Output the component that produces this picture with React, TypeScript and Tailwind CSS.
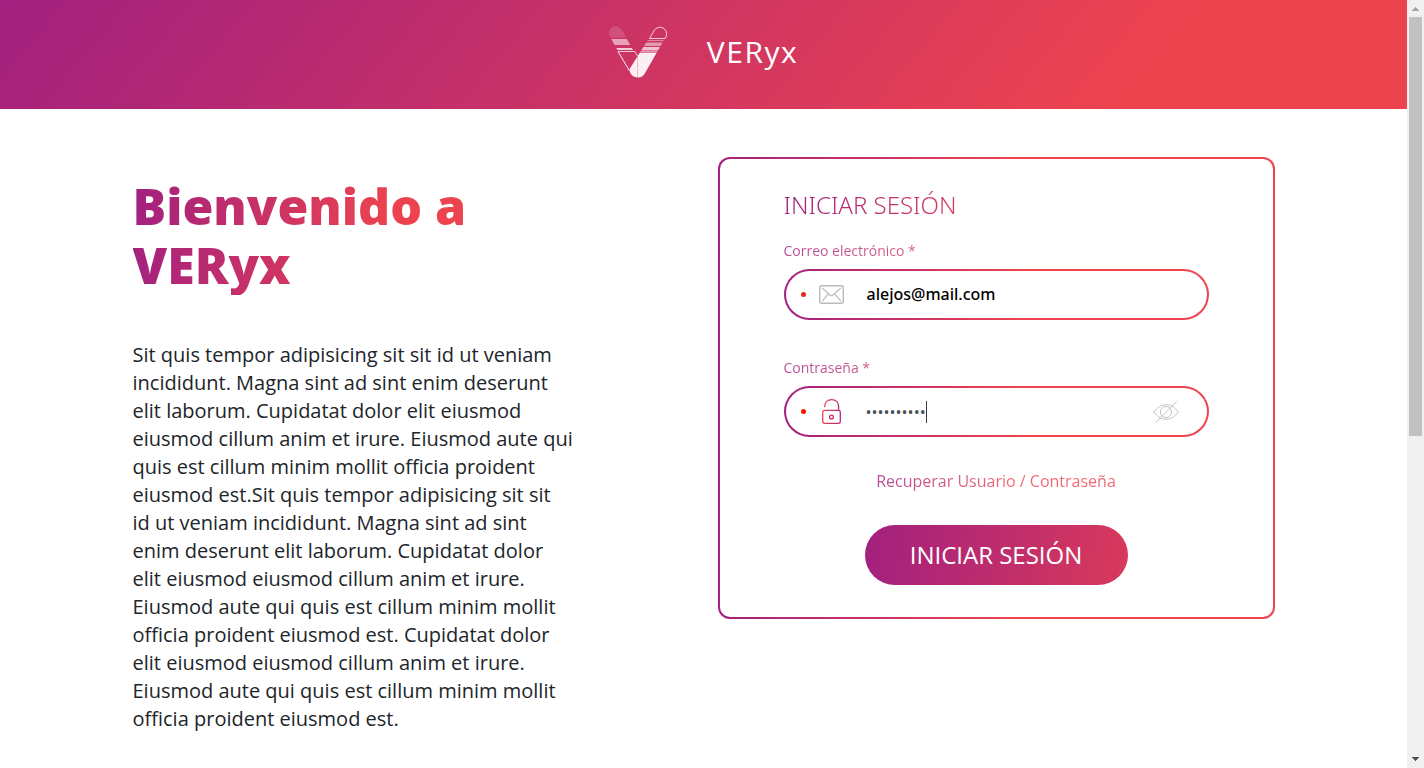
import { useState } from "react";

function Logo() {
  return (
    <svg width="58" height="52" viewBox="0 0 58 52" fill="none" aria-hidden="true">
      <defs>
        <clipPath id="left-arm">
          <path d="M.9 10.5A6.7 6.7 0 0 1 12.6 3.6L29 33V46H20.6Z" />
        </clipPath>
        <clipPath id="right-arm">
          <path d="M20.6 43L45.4 3.4A6.8 6.8 0 0 1 57 10.5L35.5 48A8.2 8.2 0 0 1 20.6 43Z" />
        </clipPath>
      </defs>
      <g clipPath="url(#left-arm)" fill="#fff">
        <path d="M0 0H30V11.5H0Z" opacity=".15" />
        <path d="M0 13H30V19H0Z" opacity=".55" />
        <path d="M0 22H30V24H0Z" opacity=".75" />
      </g>
      <path d="M9 25.5L20.6 45" stroke="#fff" strokeOpacity=".9" />
      <path d="M9 25.5H26L28.5 30" stroke="#fff" strokeOpacity=".75" />
      <path d="M40.5 12.5L45.5 4A6.7 6.7 0 0 1 57.3 10L56.2 12.5Z" stroke="#fff" strokeOpacity=".75" />
      <g clipPath="url(#right-arm)" fill="#fff">
        <path d="M20 14H58V15H20Z" opacity=".4" />
        <path d="M20 16.5H58V20H20Z" opacity=".5" />
        <path d="M20 21H58V24.5H20Z" opacity=".7" />
        <path d="M20 25.2H58V26.4H20Z" opacity=".7" />
        <path d="M20 27H58V52H20Z" opacity=".92" />
      </g>
      <path d="M28.5 30V52" stroke="#d6346b" strokeOpacity=".3" />
    </svg>
  );
}

function MailIcon() {
  return (
    <svg width="25" height="19" viewBox="0 0 25 19" fill="none" stroke="#b9b9b9" strokeLinecap="round" aria-hidden="true">
      <rect x=".7" y=".7" width="23.6" height="17.6" rx="2" strokeWidth="1.4" />
      <path d="M3.3 3.1L11.3 10.2Q12.5 11.2 13.7 10.2L21.7 3.1M3.3 15.8L9.3 9.1M21.7 15.8L15.7 9.1" strokeWidth="1.2" />
    </svg>
  );
}

function LockIcon() {
  return (
    <svg width="19" height="25" viewBox="0 0 19 25" fill="none" strokeWidth="1.3" strokeLinecap="round" aria-hidden="true">
      <defs>
        <linearGradient id="lock-stroke" x1="0" y1="0" x2="19" y2="0" gradientUnits="userSpaceOnUse">
          <stop stopColor="#ef434f" />
          <stop offset="1" stopColor="#b02878" />
        </linearGradient>
      </defs>
      <path d="M2.6 7.6C2.8 3.4 5.6.7 9.6.7C13.8.7 16.6 3.4 16.6 7.5V11.4" stroke="url(#lock-stroke)" />
      <rect x=".7" y="11.4" width="17.6" height="12.9" rx="1.8" stroke="url(#lock-stroke)" />
      <circle cx="9.5" cy="18" r="1.9" stroke="#c52b68" />
    </svg>
  );
}

function EyeOffIcon() {
  return (
    <svg width="26" height="22" viewBox="0 0 26 22" fill="none" stroke="#c4c4c4" strokeLinecap="round" aria-hidden="true">
      <path d="M.9 11C4 6.3 8.5 3.7 13 3.7S22 6.3 25.1 11C22 15.7 17.5 18.3 13 18.3S4 15.7.9 11Z" />
      <circle cx="13" cy="11" r="5.6" />
      <path d="M23.5.7L3 21.3" />
    </svg>
  );
}

const gradientText =
  "bg-[linear-gradient(90deg,#a2207f_0%,#ed434f_55%)] bg-clip-text text-transparent";

const fieldBox =
  "flex h-[51px] items-center rounded-full border-2 border-transparent pl-[15px] pr-7 [background:linear-gradient(#fff,#fff)_padding-box,linear-gradient(90deg,#a2207f_0%,#ed434f_55%)_border-box]";

export default function App() {
  const [email, setEmail] = useState("alejos@mail.com");
  const [password, setPassword] = useState("contrasena");
  const [visible, setVisible] = useState(false);

  return (
    <div className="flex h-screen overflow-hidden bg-white font-['Open_Sans','Noto_Sans',sans-serif] text-[#212529]">
      <div className="min-w-0 flex-1 overflow-hidden">
        <header className="flex h-[109px] items-center justify-center gap-10 bg-[linear-gradient(130deg,#a2207f_0%,#ed434f_80%)] pb-1.5">
          <Logo />
          <span className="text-[30px] tracking-wider text-white">VERyx</span>
        </header>

        <main className="mx-auto flex max-w-[1142px] items-start justify-between pt-12">
          <section className="w-[441px] pt-5">
            <h1 className="bg-[linear-gradient(95deg,#a2207f_0%,#ed434f_58%)] bg-clip-text text-[50px] leading-[59px] font-extrabold text-transparent">
              Bienvenido a VERyx
            </h1>
            <p className="mt-[46px] text-xl leading-7">
              Sit quis tempor adipisicing sit sit id ut veniam incididunt. Magna sint ad sint enim
              deserunt elit laborum. Cupidatat dolor elit eiusmod eiusmod cillum anim et irure.
              Eiusmod aute qui quis est cillum minim mollit officia proident eiusmod est.Sit quis
              tempor adipisicing sit sit id&nbsp;ut veniam incididunt. Magna sint ad sint enim
              deserunt elit laborum. Cupidatat dolor elit eiusmod eiusmod cillum anim et irure.
              Eiusmod aute qui quis est cillum minim mollit officia proident eiusmod est. Cupidatat
              dolor elit eiusmod eiusmod cillum anim et irure. Eiusmod aute qui quis est cillum
              minim mollit officia proident eiusmod est.
            </p>
          </section>

          <form
            onSubmit={(event) => event.preventDefault()}
            className="flex w-[557px] flex-col rounded-xl border-2 border-transparent px-16 pt-7 pb-8 [background:linear-gradient(#fff,#fff)_padding-box,linear-gradient(90deg,#a2207f_0%,#ed434f_52%)_border-box]"
          >
            <h2 className={`font-['Noto_Sans',sans-serif] text-2xl leading-9 font-light ${gradientText}`}>
              INICIAR SESIÓN
            </h2>

            <label htmlFor="email" className={`mt-[18px] mb-2 text-sm leading-5 opacity-80 ${gradientText}`}>
              Correo electrónico *
            </label>
            <div className={fieldBox}>
              <span className="mr-[13px] size-[5px] rounded-full bg-[#e6281a]" />
              <MailIcon />
              <input
                id="email"
                type="email"
                value={email}
                onChange={(event) => setEmail(event.target.value)}
                className="ml-[23px] min-w-0 flex-1 pb-0.5 font-['Noto_Sans',sans-serif] text-base font-medium text-black outline-none"
              />
            </div>

            <label htmlFor="password" className={`mt-[38px] mb-2 text-sm leading-5 opacity-80 ${gradientText}`}>
              Contraseña *
            </label>
            <div className={fieldBox}>
              <span className="mr-4 size-[5px] rounded-full bg-[#f51505]" />
              <LockIcon />
              <input
                id="password"
                type={visible ? "text" : "password"}
                value={password}
                onChange={(event) => setPassword(event.target.value)}
                className="ml-[25px] field-sizing-content min-w-0 text-base text-[#495057] caret-transparent outline-none"
              />
              <span className="h-[22px] w-px bg-[#333b43]" />
              <button
                type="button"
                aria-label="Mostrar contraseña"
                onClick={() => setVisible(!visible)}
                className="ml-auto"
              >
                <EyeOffIcon />
              </button>
            </div>

            <a href="#recuperar" className={`mt-8 self-center text-base leading-6 opacity-80 ${gradientText}`}>
              Recuperar Usuario / Contraseña
            </a>
            <button
              type="submit"
              className="mt-8 h-[60px] w-[263px] self-center rounded-full bg-[linear-gradient(100deg,#a2207f_0%,#d9395b_100%)] text-2xl text-white"
            >
              INICIAR SESIÓN
            </button>
          </form>
        </main>
      </div>

      <div aria-hidden="true" className="flex w-[17px] shrink-0 flex-col items-center bg-[#f0f0f0]">
        <svg width="17" height="17" viewBox="0 0 17 17" shapeRendering="crispEdges">
          <path d="M8 7h1v1h1v1h1v1h1v1H5v-1h1V9h1V8h1z" fill="#a3a3a3" />
        </svg>
        <div className="h-[419px] w-[13px] bg-[#c1c1c1]" />
        <svg width="17" height="17" viewBox="0 0 17 17" shapeRendering="crispEdges" className="mt-auto">
          <path d="M5 6h7v1h-1v1h-1v1H9v1H8V9H7V8H6V7H5z" fill="#505050" />
        </svg>
      </div>
    </div>
  );
}
